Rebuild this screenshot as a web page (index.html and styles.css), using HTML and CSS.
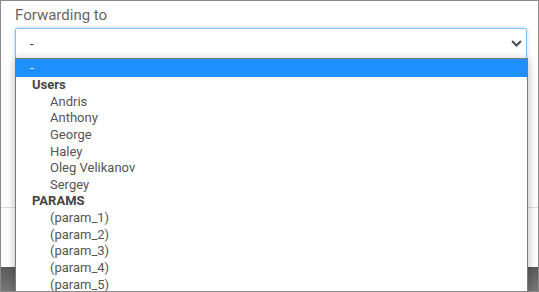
FILE: index.html
```html
<!DOCTYPE html>
<html lang="en">

<head>
    <meta charset="UTF-8">
    <meta name="viewport" content="width=device-width, initial-scale=1.0">
    <title>Forwarding</title>
    <link rel="stylesheet" href="styles.css">
</head>

<body>
    <div class="frame">
        <div class="modal">
            <div class="modal-body">
                <label class="field-label">Forwarding to</label>
                <div class="select">
                    <span class="select-value">-</span>
                    <svg class="chevron" width="11" height="7" viewBox="0 0 11 7">
                        <polyline points="1,1 5.5,5.5 10,1" fill="none" stroke="#4a4a4a" stroke-width="2"/>
                    </svg>
                </div>
            </div>
            <div class="modal-footer"></div>
        </div>
        <div class="backdrop"></div>

        <!-- open dropdown list -->
        <ul class="dropdown">
            <li class="option selected">-</li>
            <li class="group">Users</li>
            <li class="option sub">Andris</li>
            <li class="option sub">Anthony</li>
            <li class="option sub">George</li>
            <li class="option sub">Haley</li>
            <li class="option sub">Oleg Velikanov</li>
            <li class="option sub">Sergey</li>
            <li class="group">PARAMS</li>
            <li class="option sub">(param_1)</li>
            <li class="option sub">(param_2)</li>
            <li class="option sub">(param_3)</li>
            <li class="option sub">(param_4)</li>
            <li class="option sub">(param_5)</li>
        </ul>
    </div>
</body>

</html>
```

FILE: styles.css
```css
body {
    margin: 0;
    padding: 0;
    font-family: Roboto, "Liberation Sans", Arial, sans-serif;
    background-color: #fff;
}

.frame {
    position: relative;
    width: 539px;
    height: 292px;
    border: 1px solid #8a8a8a;
    box-sizing: border-box;
    overflow: hidden;
    background-color: #fff;
}

.modal {
    background-color: #fff;
}

.modal-body {
    height: 206px;
    padding: 5px 11px 0 14px;
    box-sizing: border-box;
}

.field-label {
    display: block;
    font-size: 15px;
    line-height: 18px;
    color: #666;
    margin-bottom: 4px;
}

.select {
    display: flex;
    align-items: center;
    justify-content: space-between;
    height: 31px;
    padding: 0 4px 0 14px;
    border: 1px solid #80bdff;
    border-radius: 2px;
    box-shadow: 0 0 4px rgba(128, 189, 255, 0.6);
    box-sizing: border-box;
    font-size: 13px;
    color: #333;
    background-color: #fff;
}

.chevron {
    display: block;
}

.modal-footer {
    height: 59px;
    border-top: 1px solid #ddd;
}

.backdrop {
    height: 26px;
    background: linear-gradient(#5a5a5a, #7a7a7a);
}

.dropdown {
    position: absolute;
    left: 14px;
    top: 57px;
    width: 511px;
    margin: 0;
    padding: 0;
    list-style: none;
    background-color: #fff;
    border: 1px solid #7a7a7a;
    box-shadow: 0 2px 9px rgba(0, 0, 0, 0.3);
    font-size: 13px;
}

.option,
.group {
    height: 16.65px;
    line-height: 16.65px;
    white-space: nowrap;
}

.option {
    color: #555;
    padding-left: 14px;
}

.option.selected {
    height: 18px;
    line-height: 17px;
    background-color: #1e90ff;
    color: #fff;
}

.option.sub {
    padding-left: 34px;
}

.group {
    font-weight: bold;
    color: #444;
    padding-left: 16px;
}
```
